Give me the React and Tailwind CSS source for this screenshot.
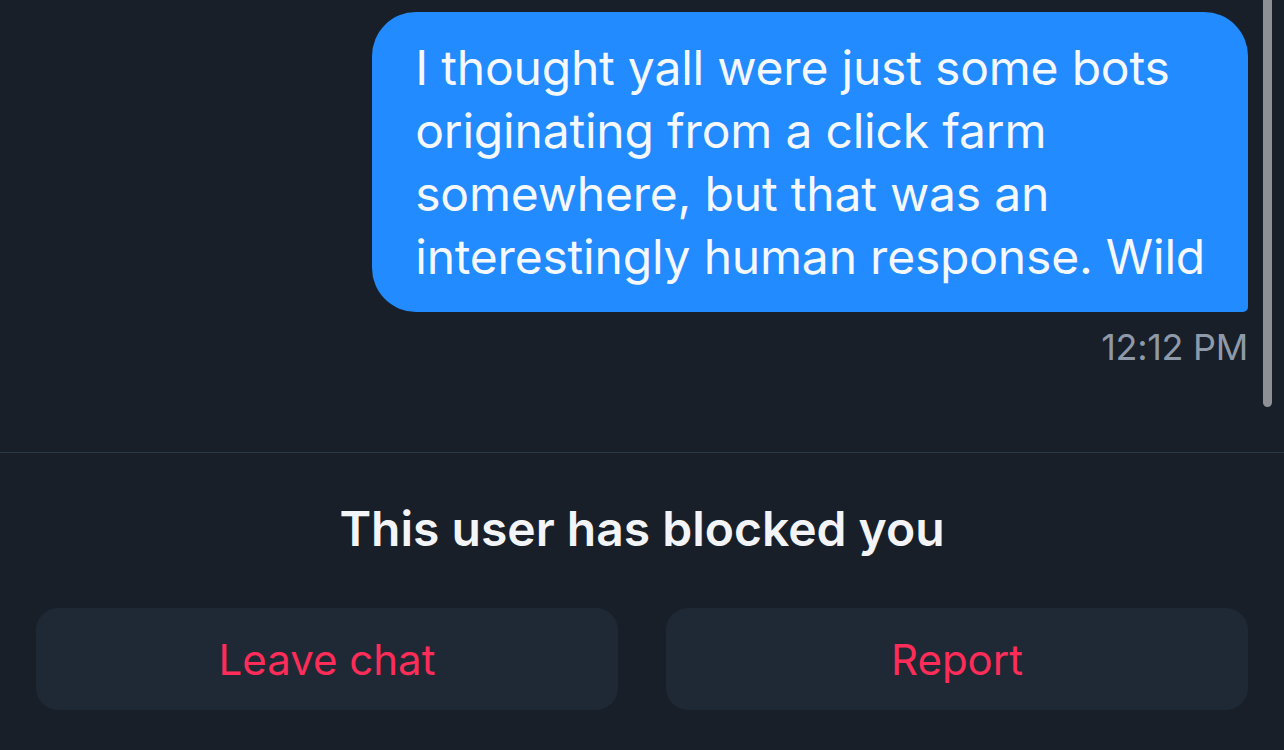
export default function App() {
  return (
    <div className="relative h-[750px] w-[1284px] overflow-hidden bg-[#181f28] font-['Inter','Noto_Sans',sans-serif]">
      {/* scrollbar */}
      <div className="absolute right-[12px] top-[-20px] h-[427px] w-[9px] rounded-full bg-[#8e9095]" />

      <div className="flex h-[452px] flex-col items-end px-[36px] pt-[12px]">
        <div className="rounded-[44px] rounded-br-[5px] bg-[#218bff] px-[43px] py-[24px] text-[48px] leading-[63px] tracking-[-0.2px] text-[#f5f8fc] whitespace-nowrap">
          I thought yall were just some bots
          <br />
          originating from a click farm
          <br />
          somewhere, but that was an
          <br />
          interestingly human response. Wild
        </div>
        <div className="mt-[13px] text-[36px] leading-[44px] tracking-[-0.3px] text-[#8e9aa9]">12:12 PM</div>
      </div>

      <div className="border-t border-[#2a3848] px-[36px] pt-[47px]">
        <p className="text-center text-[48px] font-semibold leading-[58px] text-[#f2f4f7]">
          This user has blocked you
        </p>
        <div className="mt-[50px] grid grid-cols-2 gap-[48px]">
          <button className="h-[102px] rounded-[22px] bg-[#1f2935] text-[42px] text-[#fe2c58]">
            Leave chat
          </button>
          <button className="h-[102px] rounded-[22px] bg-[#1f2935] text-[42px] text-[#fe2c58]">
            Report
          </button>
        </div>
      </div>
    </div>
  )
}
